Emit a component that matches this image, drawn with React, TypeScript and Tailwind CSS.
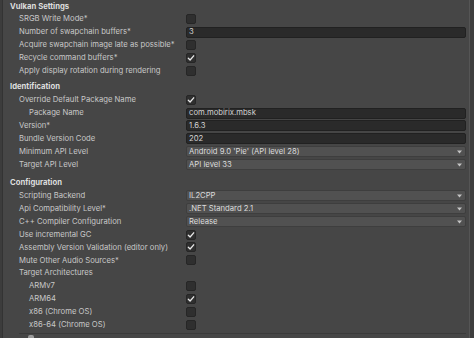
import React from 'react';

type Row =
  | { kind: 'check'; label: string; checked?: boolean; indent?: boolean }
  | { kind: 'text'; label: string; value: string; indent?: boolean }
  | { kind: 'select'; label: string; value: string; indent?: boolean }
  | { kind: 'label'; label: string; indent?: boolean };

const vulkan: Row[] = [
  { kind: 'check', label: 'SRGB Write Mode*' },
  { kind: 'text', label: 'Number of swapchain buffers*', value: '3' },
  { kind: 'check', label: 'Acquire swapchain image late as possible*' },
  { kind: 'check', label: 'Recycle command buffers*', checked: true },
  { kind: 'check', label: 'Apply display rotation during rendering' },
];

const identification: Row[] = [
  { kind: 'check', label: 'Override Default Package Name', checked: true },
  { kind: 'text', label: 'Package Name', value: 'com.mobirix.mbsk', indent: true },
  { kind: 'text', label: 'Version*', value: '1.6.3' },
  { kind: 'text', label: 'Bundle Version Code', value: '202' },
  { kind: 'select', label: 'Minimum API Level', value: "Android 9.0 'Pie' (API level 28)" },
  { kind: 'select', label: 'Target API Level', value: 'API level 33' },
];

const configuration: Row[] = [
  { kind: 'select', label: 'Scripting Backend', value: 'IL2CPP' },
  { kind: 'select', label: 'Api Compatibility Level*', value: '.NET Standard 2.1' },
  { kind: 'select', label: 'C++ Compiler Configuration', value: 'Release' },
  { kind: 'check', label: 'Use incremental GC', checked: true },
  { kind: 'check', label: 'Assembly Version Validation (editor only)', checked: true },
  { kind: 'check', label: 'Mute Other Audio Sources*' },
  { kind: 'label', label: 'Target Architectures' },
  { kind: 'check', label: 'ARMv7', indent: true },
  { kind: 'check', label: 'ARM64', checked: true, indent: true },
  { kind: 'check', label: 'x86 (Chrome OS)', indent: true },
  { kind: 'check', label: 'x86-64 (Chrome OS)', indent: true },
];

function Checkbox({ checked }: { checked?: boolean }) {
  return (
    <div className="w-[10px] h-[10px] rounded-[2px] bg-[#2f2f2f] border border-[#262626] flex items-center justify-center">
      {checked && (
        <svg width="8" height="8" viewBox="0 0 8 8">
          <path d="M1.3 4.3 L3.1 6 L6.7 1.8" fill="none" stroke="#e8e8e8" strokeWidth="1.3" strokeLinecap="round" strokeLinejoin="round" />
        </svg>
      )}
    </div>
  );
}

function Field({ row }: { row: Row }) {
  if (row.kind === 'check') return <Checkbox checked={row.checked} />;
  if (row.kind === 'text')
    return (
      <div className="w-full h-[11px] rounded-[2px] bg-[#2a2a2a] border border-[#212121] flex items-center pl-[2px] text-[#d2d2d2]">
        {row.value}
      </div>
    );
  if (row.kind === 'select')
    return (
      <div className="w-full h-[11px] rounded-[2px] bg-[#515151] border border-[#3e3e3e] flex items-center justify-between pl-[2px] pr-[3px] text-[#dcdcdc]">
        <span>{row.value}</span>
        <svg width="5" height="4" viewBox="0 0 5 4">
          <path d="M0 0.5 H5 L2.5 3.5 Z" fill="#c4c4c4" />
        </svg>
      </div>
    );
  return null;
}

function Group({ title, rows, className = '' }: { title: string; rows: Row[]; className?: string }) {
  return (
    <div className={className}>
      <div className="h-[12.9px] flex items-center pl-[7px] font-bold text-[#dedede]">{title}</div>
      {rows.map((row) => (
        <div key={row.label} className="h-[12.9px] flex items-center">
          <div className={`w-[183px] shrink-0 ${row.indent ? 'pl-[26px]' : 'pl-[16px]'} text-[#c8c8c8] whitespace-nowrap`}>
            {row.label}
          </div>
          <div className="flex-1 pr-[3px] flex items-center">
            <Field row={row} />
          </div>
        </div>
      ))}
    </div>
  );
}

export default function App() {
  return (
    <div
      className="w-[474px] h-[338px] overflow-hidden flex bg-[#464646] text-[7.7px] leading-none"
      style={{ fontFamily: 'Inter, "Liberation Sans", sans-serif' }}
    >
      <div className="w-[3px] shrink-0 bg-[#3c3c3c] border-r border-[#333333]" />
      <div className="flex-1 flex flex-col">
        <Group title="Vulkan Settings" rows={vulkan} />
        <Group title="Identification" rows={identification} className="mt-[3.5px]" />
        <Group title="Configuration" rows={configuration} className="mt-[5.5px]" />
        <div className="ml-[16px] mr-[3px] mt-[1.5px] border-t border-[#3a3a3a] pl-[9px] pt-[1px]">
          <div className="w-[6px] h-[4px] rounded-t-[2px] bg-[#9a9a9a]" />
        </div>
      </div>
      <div className="w-[5px] shrink-0 bg-[#3e3e3e] border-l border-[#555555]" />
    </div>
  );
}
